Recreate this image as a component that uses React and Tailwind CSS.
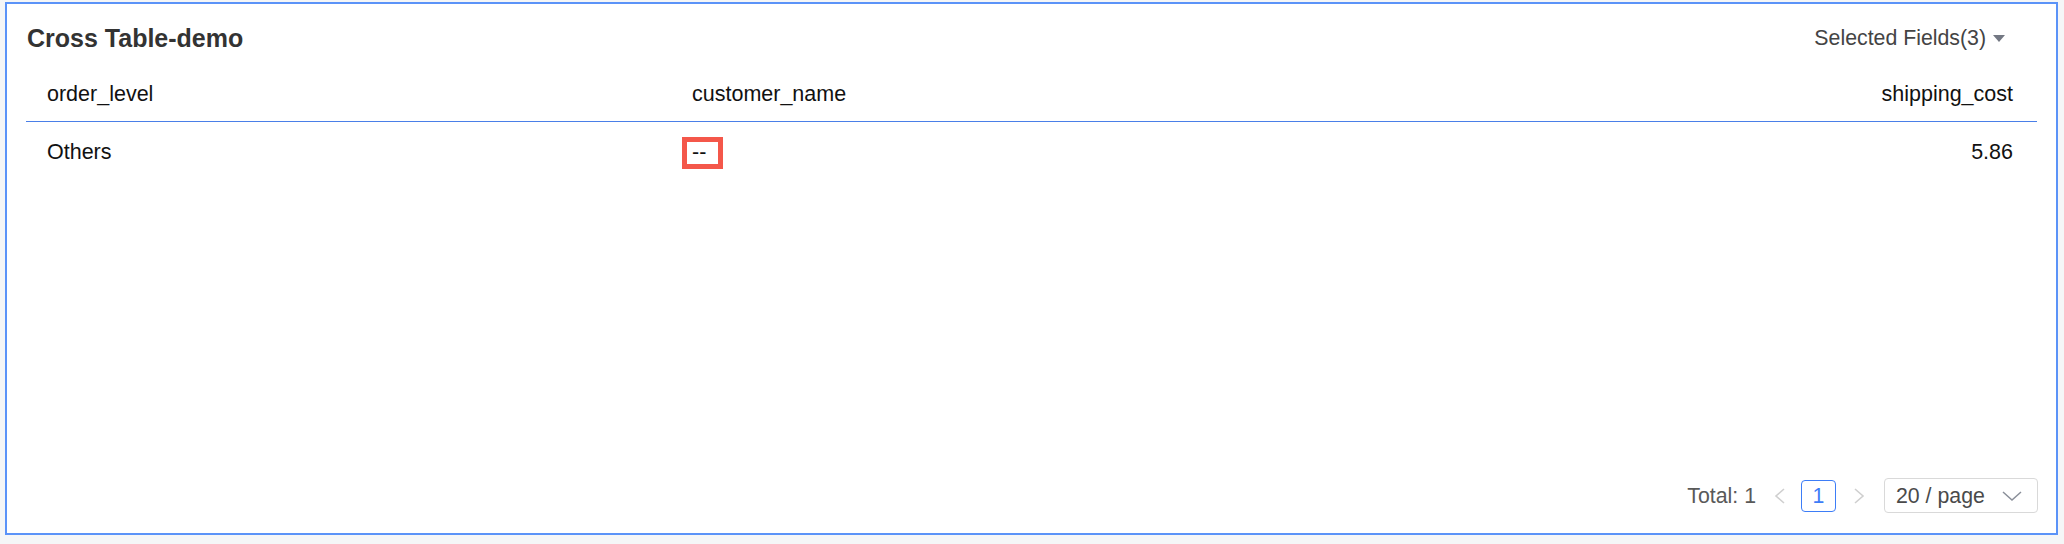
import React from 'react';

const rows = [{ level: 'Others', name: '--', cost: '5.86' }];

export default function App() {
  return (
    <div className="h-[544px] w-[2064px] bg-[#f5f6f7] pt-[2px] pl-[5px] pr-[6px] pb-[9px] font-['Liberation_Sans',Arial,sans-serif]">
      <div className="flex h-full flex-col border-2 border-[#5b93f8] bg-white">
        {/* title bar */}
        <div className="flex items-center justify-between pl-[20px] pr-[51px] pt-[18px]">
          <h1 className="text-[25px] leading-[32px] font-bold text-[#333]">Cross Table-demo</h1>
          <button className="flex items-center gap-[7px] text-[21.3px] leading-[28px] text-[#444]">
            Selected Fields(3)
            <svg width="12" height="7" viewBox="0 0 12 7">
              <path d="M0 0h12L6 7z" fill="#737883" />
            </svg>
          </button>
        </div>

        {/* table */}
        <div className="mx-[19px] text-[21.5px] leading-[28px] text-[#111]">
          <div className="flex border-b border-[#4a7fe8] pt-[26px] pb-[13px]">
            <div className="w-[644px] pl-[21px]">order_level</div>
            <div className="flex-1 pl-[22px]">customer_name</div>
            <div className="pr-[24px] text-right">shipping_cost</div>
          </div>
          {rows.map((r, i) => (
            <div key={i} className="flex pt-[16px]">
              <div className="w-[644px] pl-[21px]">{r.level}</div>
              <div className="flex-1 pl-[22px]">
                <span className="relative inline-block">
                  {r.name}
                  <span className="absolute -left-[10px] -right-[17px] -top-[1px] -bottom-[3px] border-[5px] border-[#f4574a]" />
                </span>
              </div>
              <div className="pr-[24px] text-right">{r.cost}</div>
            </div>
          ))}
        </div>

        {/* pagination */}
        <div className="mt-auto flex items-center justify-end pr-[18px] pb-[20px] text-[21.3px] leading-[28px]">
          <span className="text-[#595959]">Total: 1</span>
          <svg className="ml-[18px]" width="12" height="16" viewBox="0 0 12 16">
            <path d="M10 1L2 8l8 7" fill="none" stroke="#cfcfcf" strokeWidth="1.6" />
          </svg>
          <div className="ml-[15px] flex h-[32px] w-[35px] items-center justify-center rounded-[4px] border border-[#3d7df7] text-[#3d7df7]">
            1
          </div>
          <svg className="ml-[17px]" width="12" height="16" viewBox="0 0 12 16">
            <path d="M2 1l8 7-8 7" fill="none" stroke="#cfcfcf" strokeWidth="1.6" />
          </svg>
          <div className="ml-[19px] flex h-[35px] w-[154px] items-center justify-between rounded-[4px] border border-[#d9d9d9] pl-[11px] pr-[15px] text-[#4a4a4a]">
            <span>20 / page</span>
            <svg width="20" height="10" viewBox="0 0 20 10">
              <path d="M1 1l9 8 9-8" fill="none" stroke="#8a8f99" strokeWidth="1.5" />
            </svg>
          </div>
        </div>
      </div>
    </div>
  );
}
